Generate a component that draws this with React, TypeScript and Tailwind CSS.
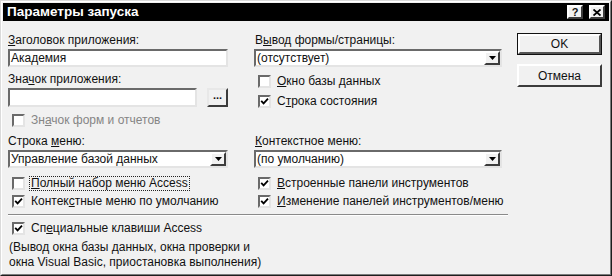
import React from 'react';

const sunken =
  'border-2 border-t-[#6a6a6a] border-l-[#6a6a6a] border-r-[#e4e4e4] border-b-[#e4e4e4]';
const raised =
  'border-2 border-t-[#ffffff] border-l-[#ffffff] border-r-[#3c3c3c] border-b-[#3c3c3c]';

const Check: React.FC<{ checked?: boolean }> = ({ checked }) => (
  <span className={`w-[13px] h-[13px] shrink-0 bg-white flex items-center justify-center ${sunken}`}>
    {checked && (
      <svg width="9" height="9" viewBox="0 0 9 9">
        <path d="M1.2 3.8 L3.6 6.4 L8 1.6" stroke="#000" strokeWidth="1.8" fill="none" />
      </svg>
    )}
  </span>
);

const CheckRow: React.FC<{
  checked?: boolean;
  disabled?: boolean;
  focus?: boolean;
  className?: string;
  children: React.ReactNode;
}> = ({ checked, disabled, focus, className = '', children }) => (
  <div className={`flex items-center h-[13px] ${className}`}>
    <span className="ml-[4px]">
      <Check checked={checked} />
    </span>
    <span
      className={`ml-[5px] px-[1px] leading-[13px] whitespace-nowrap ${
        disabled ? 'text-[#858585]' : ''
      } ${focus ? 'outline-1 outline-dotted outline-[#222]' : ''}`}
    >
      {children}
    </span>
  </div>
);

const Arrow = () => (
  <span className={`w-[16px] h-[14px] bg-[#f1f1f1] flex items-center justify-center ${raised}`}>
    <svg width="7" height="4" viewBox="0 0 7 4">
      <path d="M0 0 H7 L3.5 4 Z" fill="#000" />
    </svg>
  </span>
);

const Combo: React.FC<{ children: React.ReactNode }> = ({ children }) => (
  <div className={`h-[18px] bg-white flex items-center justify-between ${sunken}`}>
    <span className="pl-[1px] leading-[13px] whitespace-nowrap">{children}</span>
    <Arrow />
  </div>
);

export default function App() {
  return (
    <div className="w-[612px] h-[276px] border border-t-[#dadada] border-l-[#dadada] border-r-[#1e1e1e] border-b-[#1e1e1e] bg-[#f1f1f1] font-['Liberation_Sans',Arial,sans-serif] text-[12px] text-[#111]">
      <div className="h-full border border-t-white border-l-white border-r-[#7c7c7c] border-b-[#7c7c7c] p-[1px] flex flex-col">
        {/* title bar */}
        <div className="h-[18px] bg-black flex items-center justify-between pl-[4px] pr-[4px]">
          <span className="text-white font-bold text-[13.5px] leading-[16px]">Параметры запуска</span>
          <div className="flex items-center gap-[6px]">
            <span className={`w-[16px] h-[14px] bg-[#f1f1f1] flex items-center justify-center text-[11px] font-bold leading-none ${raised}`}>
              ?
            </span>
            <span className={`w-[16px] h-[14px] bg-[#f1f1f1] flex items-center justify-center ${raised}`}>
              <svg width="8" height="7" viewBox="0 0 8 7">
                <path d="M0.5 0.5 L7.5 6.5 M7.5 0.5 L0.5 6.5" stroke="#000" strokeWidth="1.8" />
              </svg>
            </span>
          </div>
        </div>

        {/* body */}
        <div className="flex pl-[5px] pt-[12px]">
          <div className="w-[500px] pt-[1px]">
            {/* section A */}
            <div className="grid grid-cols-[220px_248px] gap-x-[26px] h-[101px]">
              <div className="flex flex-col">
                <div className="h-[13px] leading-[13px]">
                  <u>З</u>аголовок приложения:
                </div>
                <div className={`mt-[2px] h-[18px] bg-white flex items-center pl-[1px] ${sunken}`}>Академия</div>
                <div className="mt-[6px] h-[13px] leading-[13px]">
                  Зна<u>ч</u>ок приложения:
                </div>
                <div className="mt-[2px] flex items-center justify-between">
                  <div className={`w-[189px] h-[19px] bg-white ${sunken}`} />
                  <span className={`w-[21px] h-[19px] bg-[#f1f1f1] flex items-center justify-center border-2 border-t-[#e8e8e8] border-l-[#e8e8e8] border-r-[#3c3c3c] border-b-[#3c3c3c]`}>
                    <span className="text-[11px] font-bold leading-none -mt-[4px]">...</span>
                  </span>
                </div>
                <CheckRow disabled className="mt-[7px]">
                  Зн<u>а</u>чок форм и отчетов
                </CheckRow>
              </div>
              <div className="flex flex-col">
                <div className="h-[13px] leading-[13px] pl-[1px]">
                  В<u>ы</u>вод формы/страницы:
                </div>
                <div className="mt-[2px]">
                  <Combo>(отсутствует)</Combo>
                </div>
                <CheckRow className="mt-[8px]">
                  <u>О</u>кно базы данных
                </CheckRow>
                <CheckRow checked className="mt-[7px]">
                  С<u>т</u>рока состояния
                </CheckRow>
              </div>
            </div>

            {/* section B */}
            <div className="grid grid-cols-[220px_248px] gap-x-[26px]">
              <div className="flex flex-col">
                <div className="h-[13px] leading-[13px]">
                  Строка <u>м</u>еню:
                </div>
                <div className="mt-[2px]">
                  <Combo>Управление базой данных</Combo>
                </div>
                <CheckRow focus className="mt-[9px]">
                  <u>П</u>олный набор меню Access
                </CheckRow>
                <CheckRow checked className="mt-[5px]">
                  Контек<u>с</u>тные меню по умолчанию
                </CheckRow>
              </div>
              <div className="flex flex-col">
                <div className="h-[13px] leading-[13px] pl-[1px]">
                  <u>К</u>онтекстное меню:
                </div>
                <div className="mt-[2px]">
                  <Combo>(по умолчанию)</Combo>
                </div>
                <CheckRow checked className="mt-[9px]">
                  <u>В</u>строенные панели инструментов
                </CheckRow>
                <CheckRow checked className="mt-[5px]">
                  <u>И</u>зменение панелей инструментов/меню
                </CheckRow>
              </div>
            </div>

            <div className="mt-[6px] h-[2px] border-t border-t-[#8a8a8a] border-b border-b-white" />

            <CheckRow checked className="mt-[6px]">
              Сп<u>е</u>циальные клавиши Access
            </CheckRow>
            <div className="mt-[5px] leading-[15px] pl-[1px]">
              (Вывод окна базы данных, окна проверки и
              <br />
              окна Visual Basic, приостановка выполнения)
            </div>
          </div>

          {/* buttons */}
          <div className="ml-[9px] w-[85px] flex flex-col">
            <div className="h-[22px] border border-[#111] bg-[#f1f1f1]">
              <div className={`h-full flex items-center justify-center border-2 border-t-white border-l-white border-r-[#555] border-b-[#555]`}>
                OK
              </div>
            </div>
            <div className={`mt-[9px] h-[23px] flex items-center justify-center bg-[#f1f1f1] ${raised}`}>
              Отмена
            </div>
          </div>
        </div>
      </div>
    </div>
  );
}
